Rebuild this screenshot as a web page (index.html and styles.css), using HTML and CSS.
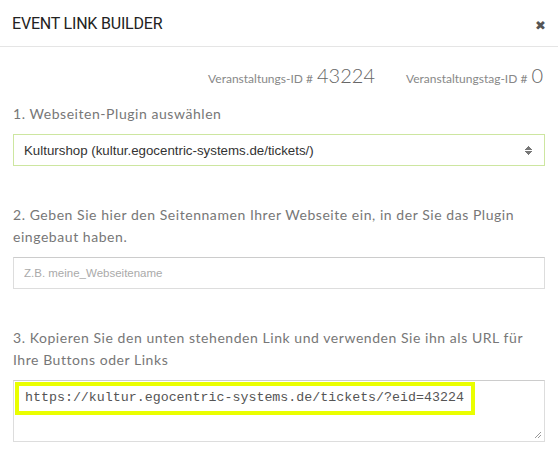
FILE: index.html
```html
<!DOCTYPE html>
<html lang="de">
<head>
    <meta charset="UTF-8">
    <meta name="viewport" content="width=device-width, initial-scale=1.0">
    <title>Event Link Builder</title>
    <link rel="stylesheet" href="styles.css">
</head>
<body>
    <div class="modal">
        <div class="modal-header">
            <h4>EVENT LINK BUILDER</h4>
            <span class="close">&#10006;</span>
        </div>
        <div class="modal-body">
            <div class="ids">
                <span class="id-label">Veranstaltungs-ID #</span>
                <span class="id-value">43224</span>
                <span class="id-label second">Veranstaltungstag-ID #</span>
                <span class="id-value">0</span>
            </div>

            <div class="form-group">
                <label>1. Webseiten-Plugin auswählen</label>
                <div class="select">
                    <span>Kulturshop (kultur.egocentric-systems.de/tickets/)</span>
                </div>
            </div>

            <div class="form-group">
                <label>2. Geben Sie hier den Seitennamen Ihrer Webseite ein, in der Sie das Plugin eingebaut haben.</label>
                <input type="text" class="input" placeholder="Z.B. meine_Webseitename">
            </div>

            <div class="form-group">
                <label>3. Kopieren Sie den unten stehenden Link und verwenden Sie ihn als URL für Ihre Buttons oder Links</label>
                <div class="link-box">
                    <span class="highlight">https://kultur.egocentric-systems.de/tickets/?eid=43224</span>
                    <svg class="grip" width="8" height="8" viewBox="0 0 8 8">
                        <path d="M7 1 L1 7 M7 4 L4 7" stroke="#999" stroke-width="1"/>
                    </svg>
                </div>
            </div>
        </div>
    </div>
</body>
</html>
```

FILE: styles.css
```css
body {
    margin: 0;
    padding: 0;
    background: #fff;
    font-family: Lato, "Open Sans", sans-serif;
    color: #333;
}
.modal {
    width: 558px;
}
.modal-header {
    display: flex;
    justify-content: space-between;
    align-items: center;
    height: 46px;
    padding: 0 12px 0 12px;
    border-bottom: 1px solid #e5e5e5;
}
.modal-header h4 {
    margin: 0;
    font-family: Roboto, sans-serif;
    font-weight: 400;
    font-size: 16px;
    color: #222;
    letter-spacing: -0.2px;
}
.close {
    font-size: 13px;
    color: #555;
    font-family: "DejaVu Sans", sans-serif;
    margin-top: 4px;
}
.modal-body {
    padding: 16px 13px 0 13px;
}
.ids {
    display: flex;
    justify-content: flex-end;
    align-items: baseline;
    color: #888;
    padding-right: 2px;
}
.id-label {
    font-size: 12px;
    margin-right: 4px;
}
.id-label.second {
    margin-left: 31px;
}
.id-value {
    font-size: 20px;
    font-weight: 300;
    color: #666;
}
.form-group {
    margin-top: 16px;
    margin-bottom: 38px;
}
.form-group label {
    display: block;
    font-size: 14px;
    line-height: 22px;
    color: #777;
    letter-spacing: 0.55px;
    margin-bottom: 9px;
}
.select {
    display: flex;
    justify-content: space-between;
    align-items: center;
    height: 30px;
    padding: 0 10px;
    border: 1px solid #cde6a0;
    font-family: "Liberation Sans", Arial, sans-serif;
    font-size: 13.3px;
    color: #333;
}
.select::after {
    content: "";
    width: 7px;
    height: 11px;
    background:
        linear-gradient(to bottom right, transparent 50%, #777 50%) left top / 4px 5px no-repeat,
        linear-gradient(to bottom left, transparent 50%, #777 50%) right top / 4px 5px no-repeat,
        linear-gradient(to top right, transparent 50%, #777 50%) left bottom / 4px 5px no-repeat,
        linear-gradient(to top left, transparent 50%, #777 50%) right bottom / 4px 5px no-repeat;
    margin-right: 2px;
}
.input {
    display: block;
    width: 100%;
    box-sizing: border-box;
    height: 32px;
    padding: 0 10px;
    border: 1px solid #ddd;
    border-top-color: #ccc;
    font-family: "Liberation Sans", Arial, sans-serif;
    font-size: 11.5px;
    color: #333;
    outline: none;
}
.input::placeholder {
    color: #aaa;
}
.link-box {
    position: relative;
    height: 60px;
    border: 1px solid #ddd;
    border-top-color: #ccc;
}
.highlight {
    display: inline-block;
    margin: 1px 0 0 1px;
    padding: 4px 7px 6px 6px;
    border: 4px solid #eaff00;
    font-family: "Liberation Mono", "Courier New", monospace;
    font-size: 13.3px;
    color: #555;
}
.grip {
    position: absolute;
    right: 2px;
    bottom: 2px;
}
```
